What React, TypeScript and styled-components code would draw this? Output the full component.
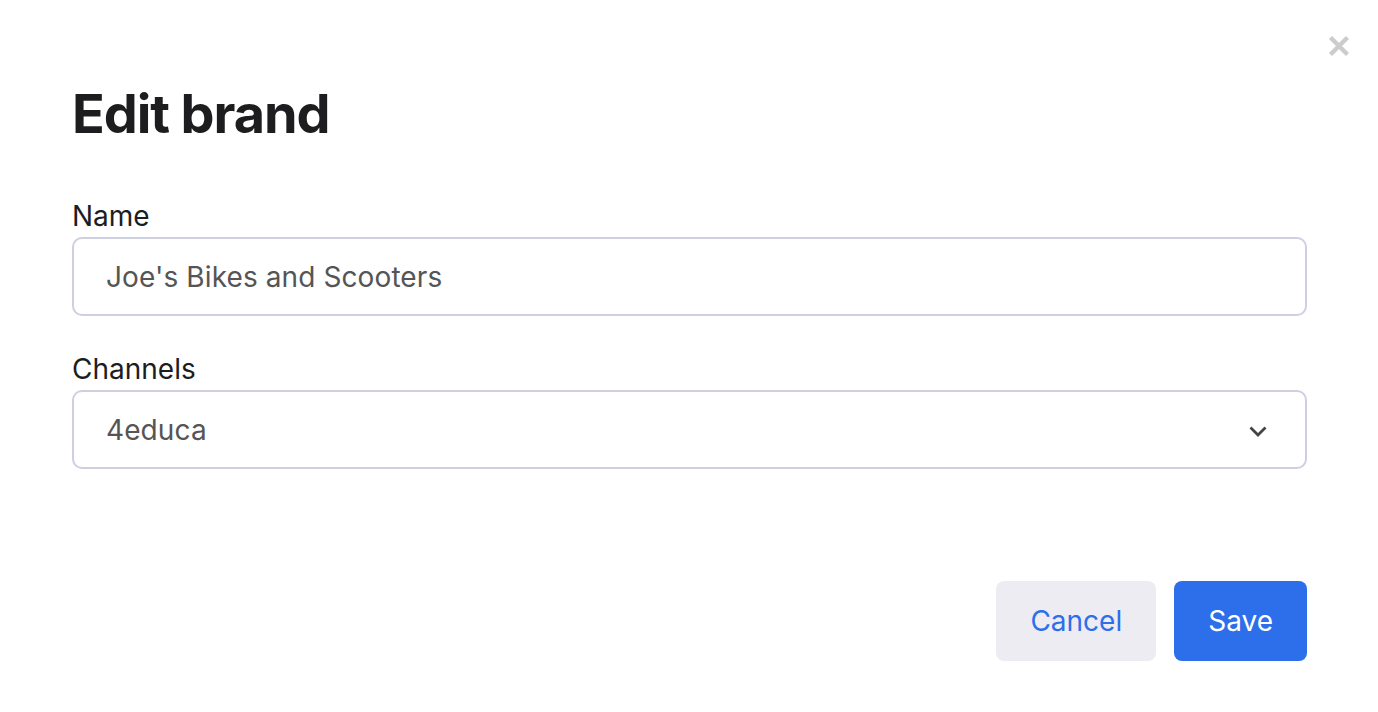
import React from "react";
import styled, { createGlobalStyle } from "styled-components";

const Global = createGlobalStyle`
  html, body { margin: 0; padding: 0; background: #ffffff; }
  body { font-family: Inter, "Noto Sans", sans-serif; -webkit-font-smoothing: antialiased; }
  * { box-sizing: border-box; }
`;

const Dialog = styled.div`
  position: relative;
  width: 1378px;
  height: 712px;
  background: #ffffff;
  padding: 78px 71px 0 72px;
  display: flex;
  flex-direction: column;
`;

const CloseButton = styled.button`
  position: absolute;
  top: 35px;
  right: 28px;
  width: 22px;
  height: 22px;
  padding: 0;
  border: none;
  background: transparent;
  display: flex;
  align-items: center;
  justify-content: center;
  cursor: pointer;
`;

const Title = styled.h1`
  margin: 0;
  font-size: 54px;
  line-height: 72px;
  font-weight: 700;
  color: #1d1d1f;
  letter-spacing: -1.1px;
`;

const Form = styled.div`
  margin-top: 50px;
  display: flex;
  flex-direction: column;
  gap: 37px;
`;

const Field = styled.div`
  display: flex;
  flex-direction: column;
  gap: 5px;
`;

const Label = styled.label`
  font-size: 28px;
  line-height: 32px;
  color: #1d1d1f;
`;

const Box = styled.div`
  height: 79px;
  border: 2px solid #cfcfe2;
  border-radius: 10px;
  display: flex;
  align-items: center;
  justify-content: space-between;
  padding: 0 38px 0 32px;
  font-size: 28px;
  letter-spacing: 0.1px;
  color: #555555;
`;

const Chevron = styled.svg`
  margin-top: 3px;
  flex: none;
`;

const Footer = styled.div`
  margin-top: 112px;
  display: flex;
  justify-content: flex-end;
  gap: 18px;
`;

const Button = styled.button<{ $primary?: boolean }>`
  height: 80px;
  padding: 0 34px;
  border: none;
  border-radius: 8px;
  font-family: Inter, "Noto Sans", sans-serif;
  font-size: 28px;
  background: ${(p) => (p.$primary ? "#2d6eea" : "#ececf2")};
  color: ${(p) => (p.$primary ? "#ffffff" : "#2d6eea")};
  cursor: pointer;
`;

export default function App() {
  return (
    <>
      <Global />
      <Dialog>
        <CloseButton aria-label="Close">
          <svg width="22" height="22" viewBox="0 0 22 22">
            <path d="M2.5 2.5 L19.5 19.5 M19.5 2.5 L2.5 19.5" stroke="#cccccc" strokeWidth="4.5" strokeLinecap="butt" />
          </svg>
        </CloseButton>
        <Title>Edit brand</Title>
        <Form>
          <Field>
            <Label>Name</Label>
            <Box>Joe's Bikes and Scooters</Box>
          </Field>
          <Field>
            <Label>Channels</Label>
            <Box>
              <span>4educa</span>
              <Chevron width="18" height="11" viewBox="0 0 18 11">
                <path d="M1.5 1.5 L9 9 L16.5 1.5" fill="none" stroke="#444444" strokeWidth="2.8" />
              </Chevron>
            </Box>
          </Field>
        </Form>
        <Footer>
          <Button>Cancel</Button>
          <Button $primary>Save</Button>
        </Footer>
      </Dialog>
    </>
  );
}
